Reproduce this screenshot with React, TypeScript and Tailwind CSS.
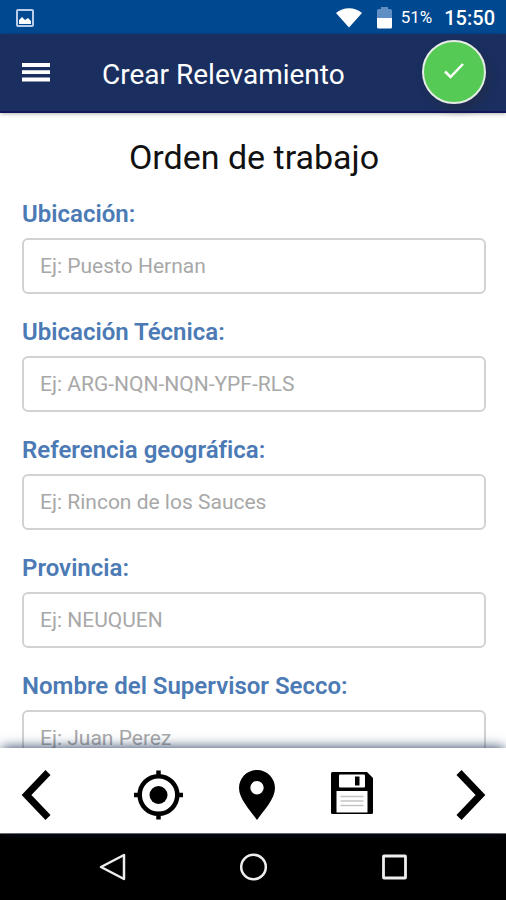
import React from "react";

const fields = [
  { id: "ubicacion", label: "Ubicación:", placeholder: "Ej: Puesto Hernan" },
  { id: "ubicacion-tecnica", label: "Ubicación Técnica:", placeholder: "Ej: ARG-NQN-NQN-YPF-RLS" },
  { id: "referencia", label: "Referencia geográfica:", placeholder: "Ej: Rincon de los Sauces" },
  { id: "provincia", label: "Provincia:", placeholder: "Ej: NEUQUEN" },
  { id: "supervisor", label: "Nombre del Supervisor Secco:", placeholder: "Ej: Juan Perez" },
];

const StatusBar: React.FC = () => (
  <div className="flex h-[34px] shrink-0 items-center bg-[#004890] pl-4 pr-[11px] pt-0.5 text-white">
    <svg className="h-[18px] w-[18px]" viewBox="0 0 18 18">
      <rect x="1" y="1" width="16" height="16" rx="1" fill="none" stroke="#b9cdea" strokeWidth="2" />
      <path d="M3 15v-4l3-3 3 3 3-2 3 3v3z" fill="#fff" />
    </svg>
    <svg className="ml-auto h-5 w-[26px]" viewBox="0 0 26 20">
      <path d="M0 5C7-1.500 19-1.500 26 5L13 19.500z" fill="#fff" />
    </svg>
    <svg className="ml-[15px] mr-px h-[22px] w-[15px]" viewBox="0 0 15 22">
      <path d="M0 11V3.500Q0 2 2 2h2V0h7v2h2q2 0 2 1.500V11z" fill="#5f8fc4" />
      <path d="M0 11h15v9q0 1.500-1.500 1.500h-12Q0 21.500 0 20z" fill="#fff" />
    </svg>
    <span className="ml-2 text-[17px]">51%</span>
    <span className="ml-3 text-xl font-medium">15:50</span>
  </div>
);

const Header: React.FC = () => (
  <header className="relative z-10 flex h-[79px] shrink-0 items-center border-b-2 border-[#14145a] bg-[#1a2f60] pl-[22px] pr-5 text-white shadow-[0_1px_4px_rgba(0,0,0,0.3)]">
    <button type="button" aria-label="Menú">
      <svg className="h-5 w-7" viewBox="0 0 28 20">
        <path d="M0 2h28M0 9.200h28M0 16.500h28" stroke="#fff" strokeWidth="3.800" />
      </svg>
    </button>
    <h1 className="ml-[52px] pt-1 text-[28px] leading-8">Crear Relevamiento</h1>
    <button
      type="button"
      aria-label="Confirmar"
      className="ml-auto -mt-0.5 flex h-16 w-16 items-center justify-center rounded-full border-2 border-[#e6ece6] bg-[#55cb55] shadow-[4px_6px_10px_rgba(40,40,50,0.4)]"
    >
      <svg className="h-5 w-5" viewBox="0 0 20 20">
        <path d="M1 9.500l5.500 5.500L19 2" fill="none" stroke="#fff" strokeWidth="2.500" />
      </svg>
    </button>
  </header>
);

const Toolbar: React.FC = () => (
  <div className="relative z-10 flex h-[85px] shrink-0 items-center justify-between bg-white px-5 pt-2 shadow-[0_-2px_12px_-2px_#1c3458]">
    <button type="button" aria-label="Anterior">
      <svg className="h-[50px] w-8" viewBox="0 0 32 50">
        <path d="M28 2.500L6.500 25 28 47.500" fill="none" stroke="#000" strokeWidth="7" />
      </svg>
    </button>
    <div className="flex items-center gap-14">
      <button type="button" aria-label="Mi posición">
        <svg className="h-[50px] w-[50px]" viewBox="0 0 50 50">
          <circle cx="25.500" cy="25" r="18.800" fill="none" stroke="#000" strokeWidth="4.500" />
          <circle cx="25.500" cy="25" r="9" />
          <path d="M25.500 0.500v7M25.500 42.500v7M1 25h7M43 25h7" stroke="#000" strokeWidth="4.500" />
        </svg>
      </button>
      <button type="button" aria-label="Marcar lugar">
        <svg className="h-[50px] w-9" viewBox="0 0 36 50">
          <path
            fillRule="evenodd"
            d="M18 0C8 0 0 8 0 18c0 11 11 22 18 32 7-10 18-21 18-32C36 8 28 0 18 0zm0 11a6.700 6.700 0 1 1 0 13.400 6.700 6.700 0 0 1 0-13.400z"
          />
        </svg>
      </button>
      <button type="button" aria-label="Guardar">
        <svg className="mb-1 h-[42px] w-[42px]" viewBox="0 0 42 42">
          <path d="M1.500 0H36l6 6v34.500q0 1.500-1.500 1.500h-39Q0 42 0 40.500v-39Q0 0 1.500 0z" />
          <rect x="8" y="2.500" width="26" height="13" rx="1" fill="#fff" />
          <rect x="24" y="4.500" width="4.500" height="9" />
          <rect x="5.500" y="19" width="31" height="21.500" fill="#fff" />
          <path d="M9.500 24.500h23M9.500 29h23M9.500 33.500h23" stroke="#c4c4c4" strokeWidth="1.500" />
        </svg>
      </button>
    </div>
    <button type="button" aria-label="Siguiente">
      <svg className="h-[50px] w-8" viewBox="0 0 32 50">
        <path d="M5 2.500L26.500 25 5 47.500" fill="none" stroke="#000" strokeWidth="7" />
      </svg>
    </button>
  </div>
);

const NavBar: React.FC = () => (
  <nav className="grid h-[67px] shrink-0 grid-cols-3 place-items-center border-t border-[#777] bg-black px-[42px]">
    <button type="button" aria-label="Atrás">
      <svg className="h-7 w-7" viewBox="0 0 28 28" fill="none" stroke="#eee" strokeWidth="2.500">
        <path d="M26 2v24L3 14z" strokeLinejoin="round" />
      </svg>
    </button>
    <button type="button" aria-label="Inicio">
      <svg className="h-7 w-7" viewBox="0 0 28 28" fill="none" stroke="#eee" strokeWidth="2.500">
        <circle cx="14.500" cy="14" r="12.300" />
      </svg>
    </button>
    <button type="button" aria-label="Recientes">
      <svg className="h-7 w-7" viewBox="0 0 28 28" fill="none" stroke="#eee" strokeWidth="2.800">
        <rect x="3.500" y="3" width="22" height="22" rx="0.500" />
      </svg>
    </button>
  </nav>
);

const App: React.FC = () => {
  return (
    <div className="flex h-screen flex-col bg-white font-['Roboto',sans-serif] [font-variant-ligatures:none]">
      <StatusBar />
      <Header />

      <main className="min-h-0 flex-1 overflow-hidden pt-6 pr-5 pl-[22px]">
        <h2 className="text-center text-[34px] leading-10 text-[#111]">Orden de trabajo</h2>
        <form className="mt-[21px] flex flex-col gap-[22px]">
          {fields.map((field) => (
            <div key={field.id} className="flex flex-col gap-2">
              <label htmlFor={field.id} className="text-2xl leading-8 font-semibold text-[#4b7ab5]">
                {field.label}
              </label>
              <input
                id={field.id}
                type="text"
                placeholder={field.placeholder}
                className="h-14 w-full rounded-md border-2 border-[#d2d2d2] px-4 text-[21px] placeholder:text-[#a8a8a8]"
              />
            </div>
          ))}
        </form>
      </main>

      <Toolbar />
      <NavBar />
    </div>
  );
};

export default App;
